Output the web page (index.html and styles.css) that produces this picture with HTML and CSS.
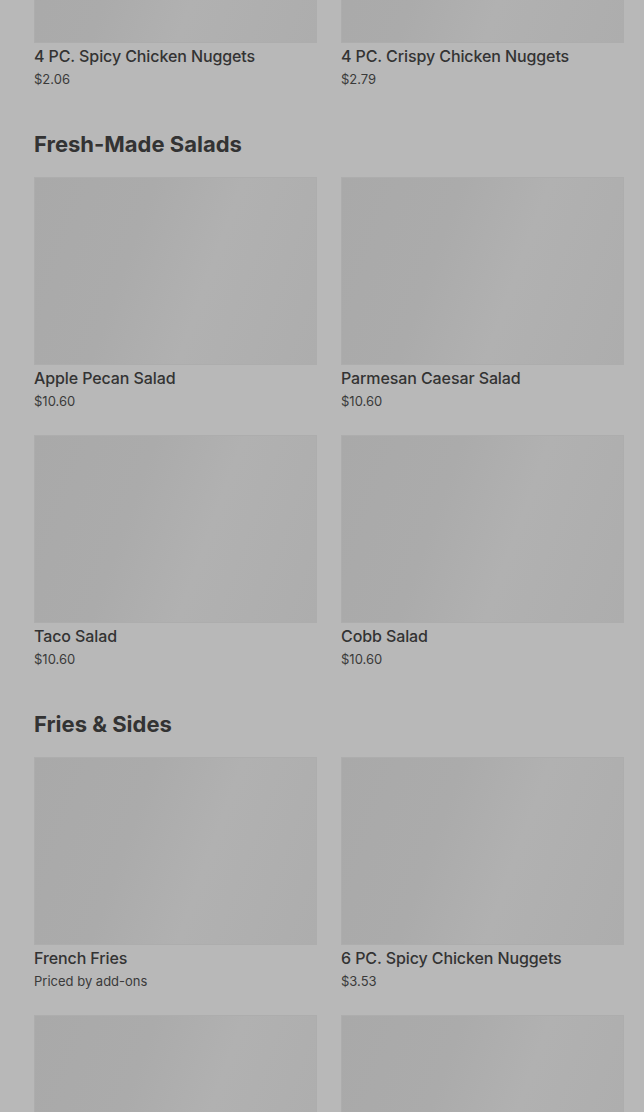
FILE: index.html
```html
<!DOCTYPE html>
<html lang="en">
<head>
    <meta charset="UTF-8">
    <meta name="viewport" content="width=device-width, initial-scale=1.0">
    <title>Menu</title>
    <link rel="stylesheet" href="styles.css">
</head>
<body>
<div class="menu">
    <section class="kategooria">
        <div class="tooted">
            <div class="toode">
                <div class="pilt"></div>
                <div class="nimi">4 PC. Spicy Chicken Nuggets</div>
                <div class="hind">$2.06</div>
            </div>
            <div class="toode">
                <div class="pilt"></div>
                <div class="nimi">4 PC. Crispy Chicken Nuggets</div>
                <div class="hind">$2.79</div>
            </div>
        </div>
    </section>
    <section class="kategooria">
        <h2>Fresh-Made Salads</h2>
        <div class="tooted">
            <div class="toode">
                <div class="pilt"></div>
                <div class="nimi">Apple Pecan Salad</div>
                <div class="hind">$10.60</div>
            </div>
            <div class="toode">
                <div class="pilt"></div>
                <div class="nimi">Parmesan Caesar Salad</div>
                <div class="hind">$10.60</div>
            </div>
            <div class="toode">
                <div class="pilt"></div>
                <div class="nimi">Taco Salad</div>
                <div class="hind">$10.60</div>
            </div>
            <div class="toode">
                <div class="pilt"></div>
                <div class="nimi">Cobb Salad</div>
                <div class="hind">$10.60</div>
            </div>
        </div>
    </section>
    <section class="kategooria">
        <h2>Fries &amp; Sides</h2>
        <div class="tooted">
            <div class="toode">
                <div class="pilt"></div>
                <div class="nimi">French Fries</div>
                <div class="hind">Priced by add-ons</div>
            </div>
            <div class="toode">
                <div class="pilt"></div>
                <div class="nimi">6 PC. Spicy Chicken Nuggets</div>
                <div class="hind">$3.53</div>
            </div>
            <div class="toode">
                <div class="pilt"></div>
                <div class="nimi"></div>
                <div class="hind"></div>
            </div>
            <div class="toode">
                <div class="pilt"></div>
                <div class="nimi"></div>
                <div class="hind"></div>
            </div>
        </div>
    </section>
</div>
</body>
</html>
```

FILE: styles.css
```css
body {
    margin: 0;
    background-color: #b8b8b8;
    font-family: Inter, "Liberation Sans", sans-serif;
    color: #333;
    overflow: hidden;
}
.menu {
    margin-top: -145px;
    padding: 0 20px 0 34px;
}
.kategooria {
    margin-bottom: 42px;
}
.kategooria h2 {
    margin: 0 0 19px;
    font-size: 22px;
    line-height: 28px;
    font-weight: 700;
    color: #333;
}
.tooted {
    display: grid;
    grid-template-columns: 1fr 1fr;
    column-gap: 24px;
    row-gap: 25px;
}
.pilt {
    height: 188px;
    background: linear-gradient(110deg, #a9a9a9 0%, #ababab 35%, #b1b1b1 60%, #adadad 100%);
    box-shadow: inset 0 0 0 1px #adadad;
}
.nimi {
    margin-top: 3px;
    font-size: 16px;
    line-height: 20px;
    font-weight: 500;
    letter-spacing: -0.1px;
    min-height: 20px;
}
.hind {
    margin-top: 4px;
    font-size: 13px;
    line-height: 18px;
    min-height: 18px;
    color: #3a3a3a;
}
```
